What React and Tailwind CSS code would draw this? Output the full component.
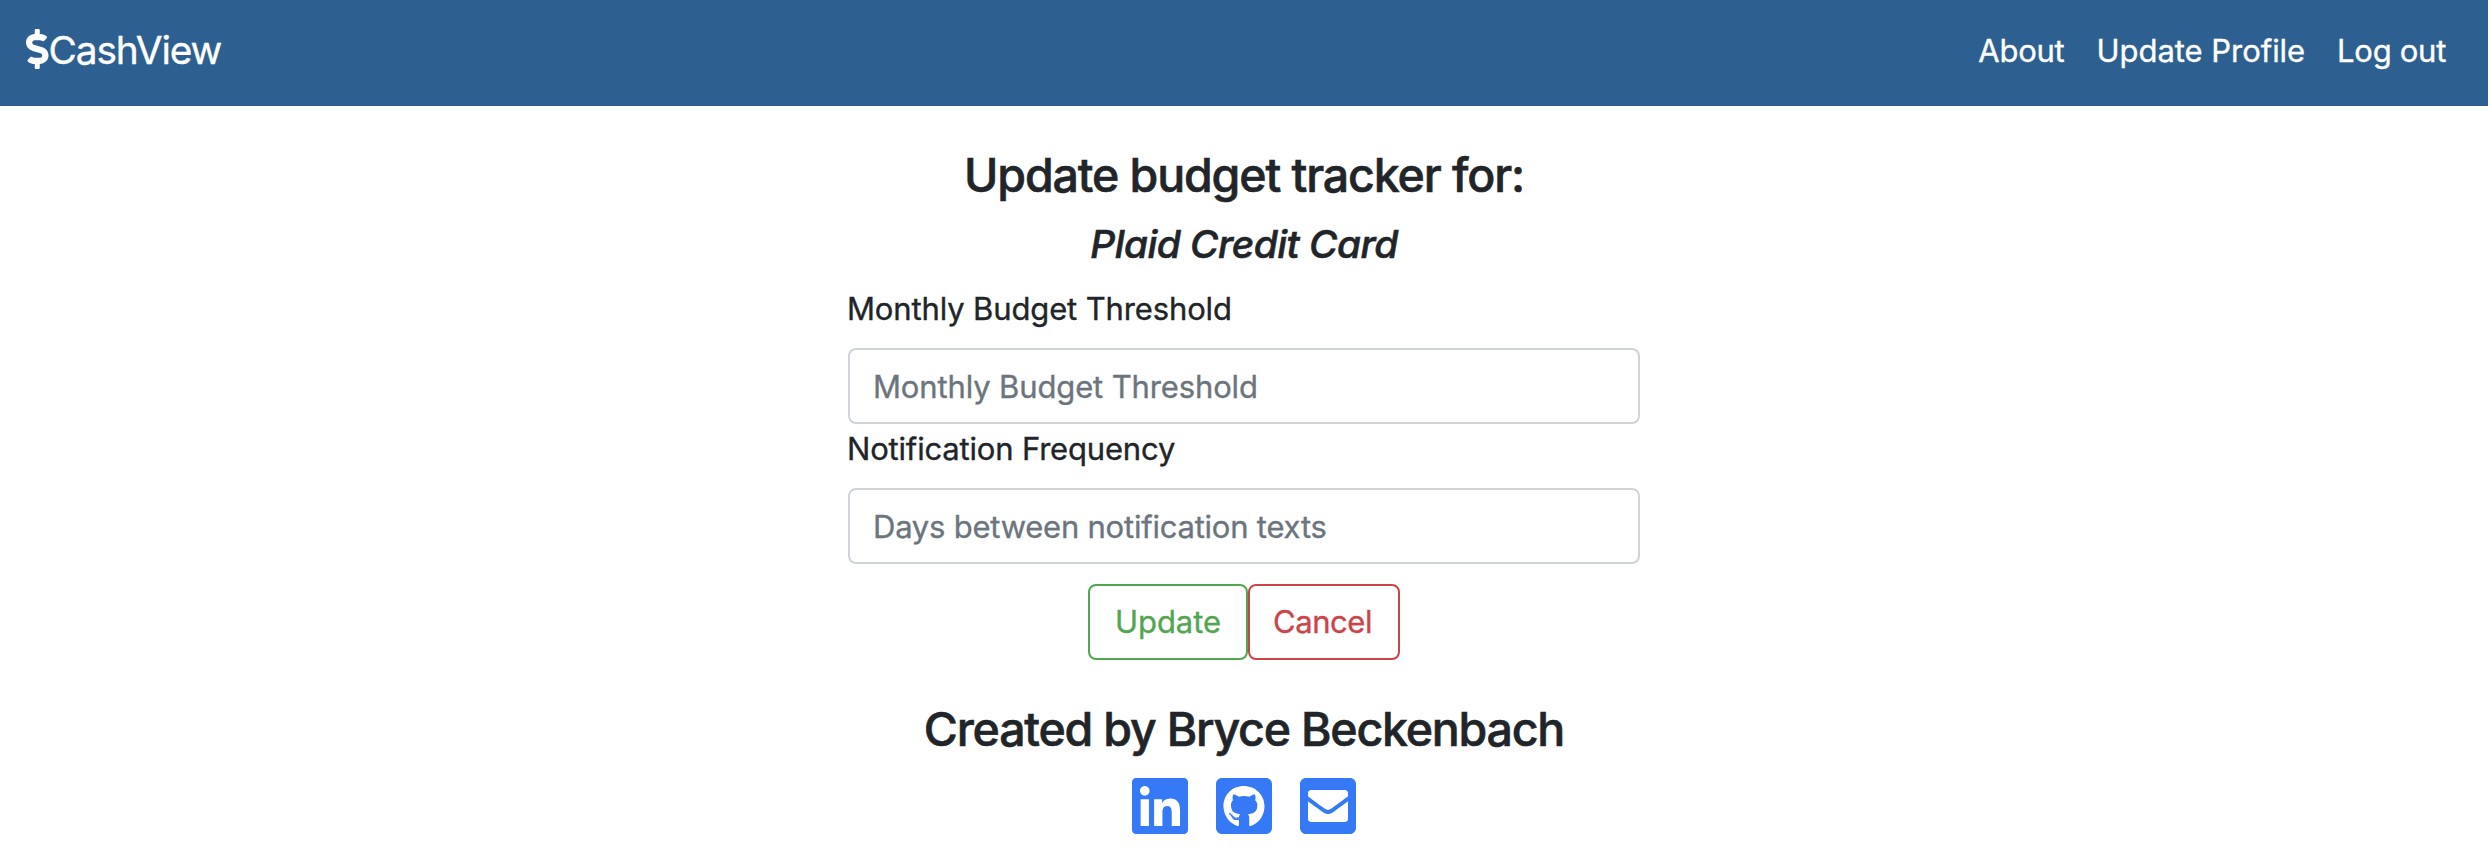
import React from "react";
import { FaDollarSign, FaLinkedin, FaGithubSquare, FaEnvelopeSquare } from "react-icons/fa";

function Navbar() {
  return (
    <header className="flex h-[106px] items-start border-b border-[#2a5a8b] bg-[#2d5f91] pl-[26px] pr-[42px] text-white">
      <a href="#" className="flex pt-5">
        <FaDollarSign className="mt-[9px] h-10 w-[22.5px]" />
        <span className="text-[38.8px] leading-[60px] tracking-[-1.09px]">CashView</span>
      </a>
      <nav className="ml-auto flex gap-8 pt-[21px] text-[31px] leading-[60px]">
        <a href="#" className="tracking-[-0.25px]">About</a>
        <a href="#" className="tracking-[-0.04px]">Update Profile</a>
        <a href="#" className="tracking-[-0.29px]">Log out</a>
      </nav>
    </header>
  );
}

const inputClass =
  "block h-[76px] w-full rounded-lg border-2 border-[#ced4da] bg-white px-[23px] text-[31px] text-[#212529] outline-none placeholder:text-[#6c757d] placeholder:opacity-100";

function BudgetForm() {
  return (
    <form className="flex w-[792px] flex-col">
      <label htmlFor="threshold" className="-ml-px mt-[17px] text-[31px] leading-[48px] tracking-[-0.134px]">
        Monthly Budget Threshold
      </label>
      <input
        id="threshold"
        placeholder="Monthly Budget Threshold"
        className={`mt-[15px] tracking-[-0.134px] ${inputClass}`}
      />
      <label htmlFor="frequency" className="-ml-px mt-px text-[31px] leading-[48px] tracking-[-0.18px]">
        Notification Frequency
      </label>
      <input
        id="frequency"
        placeholder="Days between notification texts"
        className={`mt-[15px] tracking-[-0.226px] ${inputClass}`}
      />
      <div className="mt-5 flex justify-center text-[31px] leading-[72px]">
        <button type="button" className="h-[76px] w-40 rounded-lg border-2 border-[#53a651] tracking-[-0.055px] text-[#53a651]">
          Update
        </button>
        <button type="button" className="h-[76px] w-[152px] rounded-lg border-2 border-[#cb444a] pr-[3px] tracking-[-0.43px] text-[#cb444a]">
          Cancel
        </button>
      </div>
    </form>
  );
}

function Footer() {
  return (
    <footer className="mt-10 flex flex-col items-center">
      <h3 className="text-[46.5px] font-medium leading-[58px] tracking-[-1.22px] [-webkit-text-stroke:0.6px_currentColor]">Created by Bryce Beckenbach</h3>
      <div className="mt-5 flex gap-7 text-[#3579f6]">
        <a href="#" aria-label="LinkedIn" className="flex h-14 w-14 items-center justify-center">
          <FaLinkedin className="h-16 w-14" />
        </a>
        <a href="#" aria-label="GitHub" className="flex h-14 w-14 items-center justify-center">
          <FaGithubSquare className="h-16 w-14" />
        </a>
        <a href="#" aria-label="Email" className="flex h-14 w-14 items-center justify-center">
          <FaEnvelopeSquare className="h-16 w-14" />
        </a>
      </div>
    </footer>
  );
}

export default function App() {
  return (
    <div className="h-[846px] overflow-hidden bg-white font-['Inter',sans-serif] text-[#212529] [-webkit-text-stroke:0.35px_currentColor]">
      <Navbar />
      <main className="flex flex-col items-center pt-10">
        <h3 className="text-[46.5px] font-medium leading-[58px] tracking-[-1.127px] [-webkit-text-stroke:0.6px_currentColor]">Update budget tracker for:</h3>
        <h5 className="mt-4 text-[38.8px] font-medium italic leading-[48px] tracking-[-0.52px] [-webkit-text-stroke:0.6px_currentColor]">Plaid Credit Card</h5>
        <BudgetForm />
        <Footer />
      </main>
    </div>
  );
}
